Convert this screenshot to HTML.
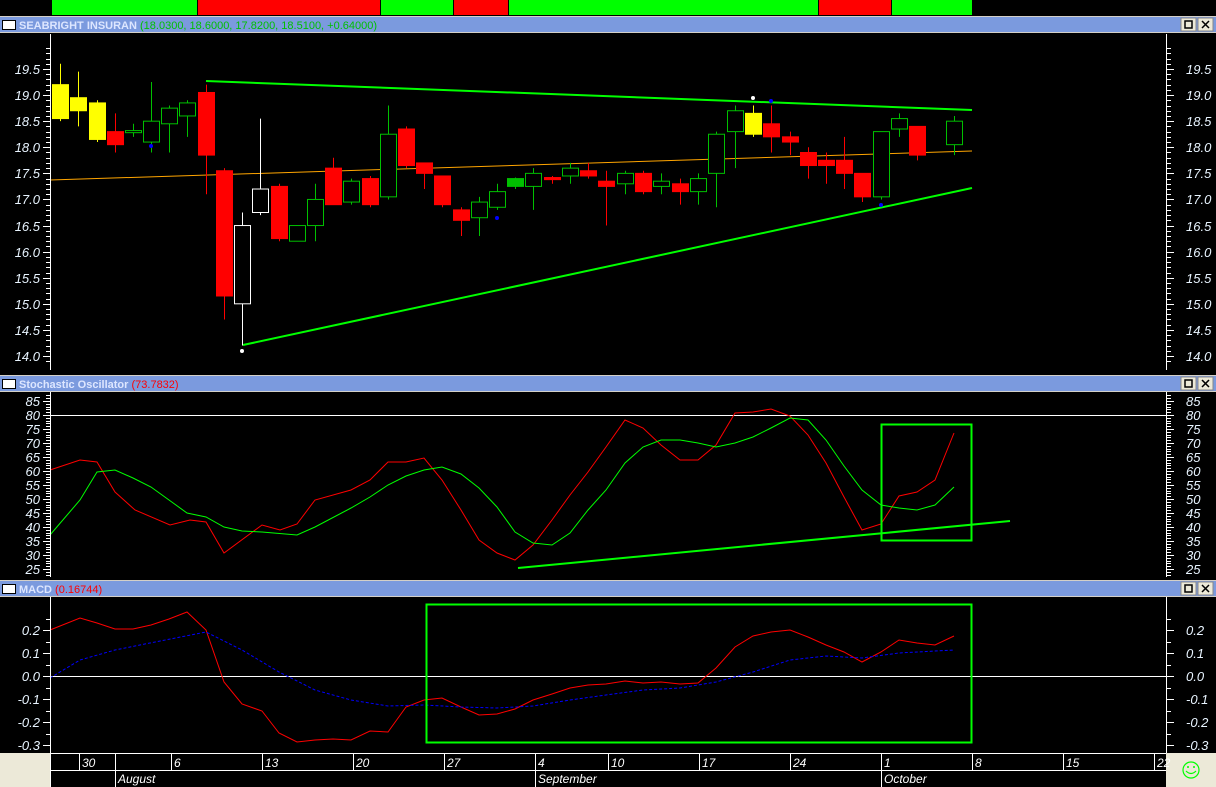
<!DOCTYPE html>
<html><head><meta charset="utf-8"><style>
body{margin:0;background:#000;width:1216px;height:787px;overflow:hidden}
svg{display:block}
text{font-family:"Liberation Sans",sans-serif}
</style></head><body>
<svg id="s" width="1216" height="787" xmlns="http://www.w3.org/2000/svg">
<rect width="1216" height="787" fill="#000"/>
<rect x="52" y="0" width="145" height="15" fill="#00ff00"/>
<rect x="198" y="0" width="182" height="15" fill="#ff0000"/>
<rect x="381" y="0" width="72" height="15" fill="#00ff00"/>
<rect x="454" y="0" width="54" height="15" fill="#ff0000"/>
<rect x="509" y="0" width="309" height="15" fill="#00ff00"/>
<rect x="819" y="0" width="72" height="15" fill="#ff0000"/>
<rect x="892" y="0" width="80" height="15" fill="#00ff00"/>
<g id="bars"></g>
<line x1="50" y1="180" x2="972" y2="151" stroke="#ffa500" stroke-width="1"/>
<line x1="206" y1="81" x2="972" y2="110" stroke="#00ff00" stroke-width="2"/>
<line x1="243" y1="345" x2="972" y2="188" stroke="#00ff00" stroke-width="2"/>
<g id="candles"></g>
<circle cx="242" cy="351" r="2" fill="#fff"/>
<circle cx="753" cy="98" r="2" fill="#fff"/>
<circle cx="151" cy="146" r="2" fill="#00f"/><circle cx="497" cy="218" r="2" fill="#00f"/>
<circle cx="771" cy="101" r="2" fill="#00f"/><circle cx="881" cy="205" r="2" fill="#00f"/>
<line x1="50" y1="415.5" x2="1166" y2="415.5" stroke="#fff"/>
<polyline fill="none" stroke="#ff0000" points="50,470 80,460 97,462 115,492 135,510 170,525 190,520 206,522 224,553 262,525 280,530 297,524 315,500 351,490 370,480 388,462 406,462 424,458 442,480 461,510 479,540 497,553 515,560 533,545 552,520 570,495 588,472 606,447 625,420 643,428 661,445 680,460 698,460 716,445 735,413 753,412 771,409 790,416 808,435 826,463 844,497 862,530 881,524 899,496 917,492 935,480 954,433"/>
<polyline fill="none" stroke="#00ff00" points="50,535 80,500 97,472 115,470 133,478 151,487 169,500 187,513 206,517 224,527 242,531 262,532 297,535 315,527 351,508 370,497 388,485 406,476 424,470 442,467 461,474 479,488 497,507 515,532 533,543 552,545 570,533 588,510 606,490 625,463 643,447 661,440 680,440 698,443 716,447 735,443 753,437 771,428 790,418 808,420 826,440 844,466 862,490 881,505 899,508 917,510 935,505 954,487"/>
<rect x="881.5" y="424.5" width="90" height="116" fill="none" stroke="#00ff00" stroke-width="2"/>
<line x1="518" y1="568" x2="1010" y2="521" stroke="#00ff00" stroke-width="2"/>
<line x1="50" y1="676.5" x2="1166" y2="676.5" stroke="#fff"/>
<polyline fill="none" stroke="#ff0000" points="50,630 80,618 97,623 115,629 133,629 151,625 169,619 187,612 206,630 224,682 242,704 262,711 279,733 297,742 315,740 333,739 351,740 370,731 388,732 406,707 424,700 442,698 461,707 479,715 497,714 515,709 533,700 552,694 570,688 588,685 606,684 625,681 643,683 661,682 680,684 698,683 716,668 735,647 753,636 771,632 790,630 808,637 826,645 844,652 862,662 881,652 899,640 917,643 935,645 954,636"/>
<polyline fill="none" stroke="#0000ff" stroke-dasharray="3,2" points="50,678 80,660 115,650 150,643 206,632 242,650 279,672 315,690 351,700 388,706 424,705 461,707 497,708 533,706 570,700 606,695 643,690 680,688 716,682 753,672 790,660 826,656 862,658 899,653 954,650"/>
<rect x="426.5" y="604.5" width="545" height="138" fill="none" stroke="#00ff00" stroke-width="2"/>
<g id="axes"></g>
<rect x="0" y="753" width="50" height="34" fill="#ece9d8"/>
<rect x="1166" y="753" width="50" height="34" fill="#ece9d8"/>
<line x1="50" y1="753.5" x2="1166" y2="753.5" stroke="#fff"/>
<line x1="50" y1="770.5" x2="1166" y2="770.5" stroke="#fff"/>
<line x1="50.5" y1="753" x2="50.5" y2="787" stroke="#fff"/>
<g id="dates" font-style="italic" font-size="12" fill="#fff"></g>
<circle cx="1191" cy="770" r="8" fill="none" stroke="#00ff00" stroke-width="1.2"/>
<circle cx="1188" cy="767" r="1" fill="#00ff00"/><circle cx="1194" cy="767" r="1" fill="#00ff00"/>
<path d="M1186 771 Q1191 776 1196 771" fill="none" stroke="#00ff00" stroke-width="1.2"/>
</svg>
<script>
const NS="http://www.w3.org/2000/svg";
function el(p,t,a,txt){const e=document.createElementNS(NS,t);for(const k in a)e.setAttribute(k,a[k]);if(txt!==undefined)e.textContent=txt;p.appendChild(e);return e;}
const bars=document.getElementById('bars');
[[16,"SEABRIGHT INSURAN","(18.0300, 18.6000, 17.8200, 18.5100, +0.64000)","#00c000"],[375,"Stochastic Oscillator","(73.7832)","#ff0000"],[580,"MACD","(0.16744)","#ff0000"]].forEach(([y,n,v,c])=>{
 el(bars,'rect',{x:0,y:y,width:1216,height:17,fill:'#7b9ade'});
 el(bars,'line',{x1:0,y1:y+0.5,x2:1216,y2:y+0.5,stroke:'#d4d0c8'});
 el(bars,'line',{x1:0,y1:y+16.5,x2:1216,y2:y+16.5,stroke:'#d4d0c8'});
 el(bars,'rect',{x:2.5,y:y+4.5,width:13,height:9,fill:'#fff',stroke:'#000'});
 const t=el(bars,'text',{x:19,y:y+13,'font-size':11});
 el(t,'tspan',{'font-weight':'bold',fill:'#dde6ff'},n);
 el(t,'tspan',{fill:c},' '+v);
 [1181,1198].forEach((bx,i)=>{el(bars,'rect',{x:bx,y:y+2,width:15,height:13,fill:'#ece9d8',stroke:'#888'});
  if(i==0)el(bars,'rect',{x:bx+4,y:y+5,width:7,height:7,fill:'none',stroke:'#000','stroke-width':1.5});
  else el(bars,'path',{d:`M${bx+4} ${y+5}l7 7M${bx+11} ${y+5}l-7 7`,stroke:'#000','stroke-width':1.5});});
});
const py=p=>69+(19.5-p)*52.18;
const C=[[60,'y',19.2,18.55,19.6,18.5],[78,'y',18.95,18.7,19.45,18.4],[97,'y',18.85,18.15,18.9,18.1],[115,'r',18.3,18.05,18.65,17.9],[133,'g',18.32,18.28,18.45,18.2],[151,'g',18.1,18.5,19.25,17.9],[169,'g',18.45,18.75,18.8,17.9],[187,'g',18.6,18.85,18.9,18.2],[206,'r',19.05,17.85,19.2,17.1],[224,'r',17.55,15.15,17.6,14.7],[242,'w',15.0,16.5,16.75,14.2],[260,'w',16.75,17.2,18.55,16.7],[279,'r',17.25,16.25,17.3,16.2],[297,'g',16.2,16.5,16.5,16.2],[315,'g',16.5,17.0,17.3,16.2],[333,'r',17.6,16.9,17.8,16.9],[351,'g',16.95,17.35,17.4,16.9],[370,'r',17.4,16.9,17.45,16.85],[388,'g',17.05,18.25,18.8,17.0],[406,'r',18.35,17.65,18.4,17.6],[424,'r',17.7,17.5,17.7,17.2],[442,'r',17.45,16.9,17.45,16.85],[461,'r',16.8,16.6,16.85,16.3],[479,'g',16.65,16.95,17.05,16.3],[497,'g',16.85,17.15,17.3,16.8],[515,'G',17.25,17.4,17.42,17.2],[533,'g',17.25,17.5,17.6,16.8],[552,'r',17.42,17.38,17.45,17.3],[570,'g',17.45,17.6,17.7,17.3],[588,'r',17.55,17.45,17.7,17.4],[606,'r',17.35,17.25,17.55,16.5],[625,'g',17.3,17.5,17.55,17.1],[643,'r',17.5,17.15,17.55,17.1],[661,'g',17.25,17.35,17.5,17.1],[680,'r',17.3,17.15,17.4,16.9],[698,'g',17.15,17.4,17.5,16.9],[716,'g',17.5,18.25,18.3,16.85],[735,'g',18.3,18.7,18.8,17.6],[753,'y',18.65,18.25,18.8,18.2],[771,'r',18.45,18.2,18.8,17.9],[790,'r',18.2,18.1,18.3,17.85],[808,'r',17.9,17.65,18.0,17.4],[826,'r',17.75,17.65,17.9,17.3],[844,'r',17.75,17.5,18.2,17.2],[862,'r',17.5,17.05,17.5,16.95],[881,'g',17.05,18.3,18.3,17.0],[899,'g',18.35,18.55,18.65,18.2],[917,'r',18.4,17.85,18.4,17.75],[954,'g',18.05,18.5,18.6,17.85]];
const cg=document.getElementById('candles');
const col={y:'#ffff00',r:'#ff0000',g:'#00c000',G:'#00c000',w:'#ffffff'};
C.forEach(([x,t,o,c,h,l])=>{
 const top=py(Math.max(o,c)),bot=py(Math.min(o,c)),cl=col[t];
 el(cg,'line',{x1:x+.5,y1:py(h),x2:x+.5,y2:py(l),stroke:cl});
 const hollow=(t=='g'||t=='w');
 el(cg,'rect',{x:x-7.5,y:top,width:16,height:Math.max(1,bot-top),fill:hollow?'#000':cl,stroke:cl});
});
const ax=document.getElementById('axes');
function axis(y0,y1,labels){
 el(ax,'line',{x1:50.5,y1:y0,x2:50.5,y2:y1,stroke:'#fff'});
 el(ax,'line',{x1:1166.5,y1:y0,x2:1166.5,y2:y1,stroke:'#fff'});
 labels.forEach(([v,y,maj])=>{
  el(ax,'line',{x1:maj?43:46,y1:y+.5,x2:50,y2:y+.5,stroke:'#fff'});
  el(ax,'line',{x1:1167,y1:y+.5,x2:maj?1174:1171,y2:y+.5,stroke:'#fff'});
  if(v!==null){
   el(ax,'text',{x:40,y:y+5,'text-anchor':'end','font-size':13,'font-style':'italic',fill:'#e8f4ff'},v);
   el(ax,'text',{x:1186,y:y+5,'font-size':13,'font-style':'italic',fill:'#e8f4ff'},v);}
 });
}
let L=[];for(let p=19.9;p>=13.85;p-=0.1){const y=Math.round(py(p));const r=Math.round(p*10);L.push([r%5==0?(r/10).toFixed(1):null,y,r%5==0]);}
axis(34,370,L);
L=[];for(let v=87;v>=23;v--){const y=Math.round(401+(85-v)*2.8);if(y>577||y<392)continue;L.push([v%5==0?String(v):null,y,v%5==0]);}
axis(392,577,L);
L=[];for(let v=25;v>=-32;v-=5){const y=Math.round(676-v*2.3);L.push([v%10==0?(v/100).toFixed(1):null,y,v%10==0]);}
axis(597,753,L);
const dg=document.getElementById('dates');
[[79,'30'],[171,'6'],[262,'13'],[353,'20'],[444,'27'],[535,'4'],[608,'10'],[699,'17'],[790,'24'],[881,'1'],[972,'8'],[1063,'15'],[1154,'22']].forEach(([x,t])=>{
 el(dg,'line',{x1:x+.5,y1:753,x2:x+.5,y2:770,stroke:'#fff'});
 el(dg,'text',{x:x+3,y:767},t);});
[[115,'August'],[535,'September'],[881,'October']].forEach(([x,t])=>{
 el(dg,'line',{x1:x+.5,y1:753,x2:x+.5,y2:787,stroke:'#fff'});
 el(dg,'text',{x:x+3,y:783},t);});
</script>
</body></html>
